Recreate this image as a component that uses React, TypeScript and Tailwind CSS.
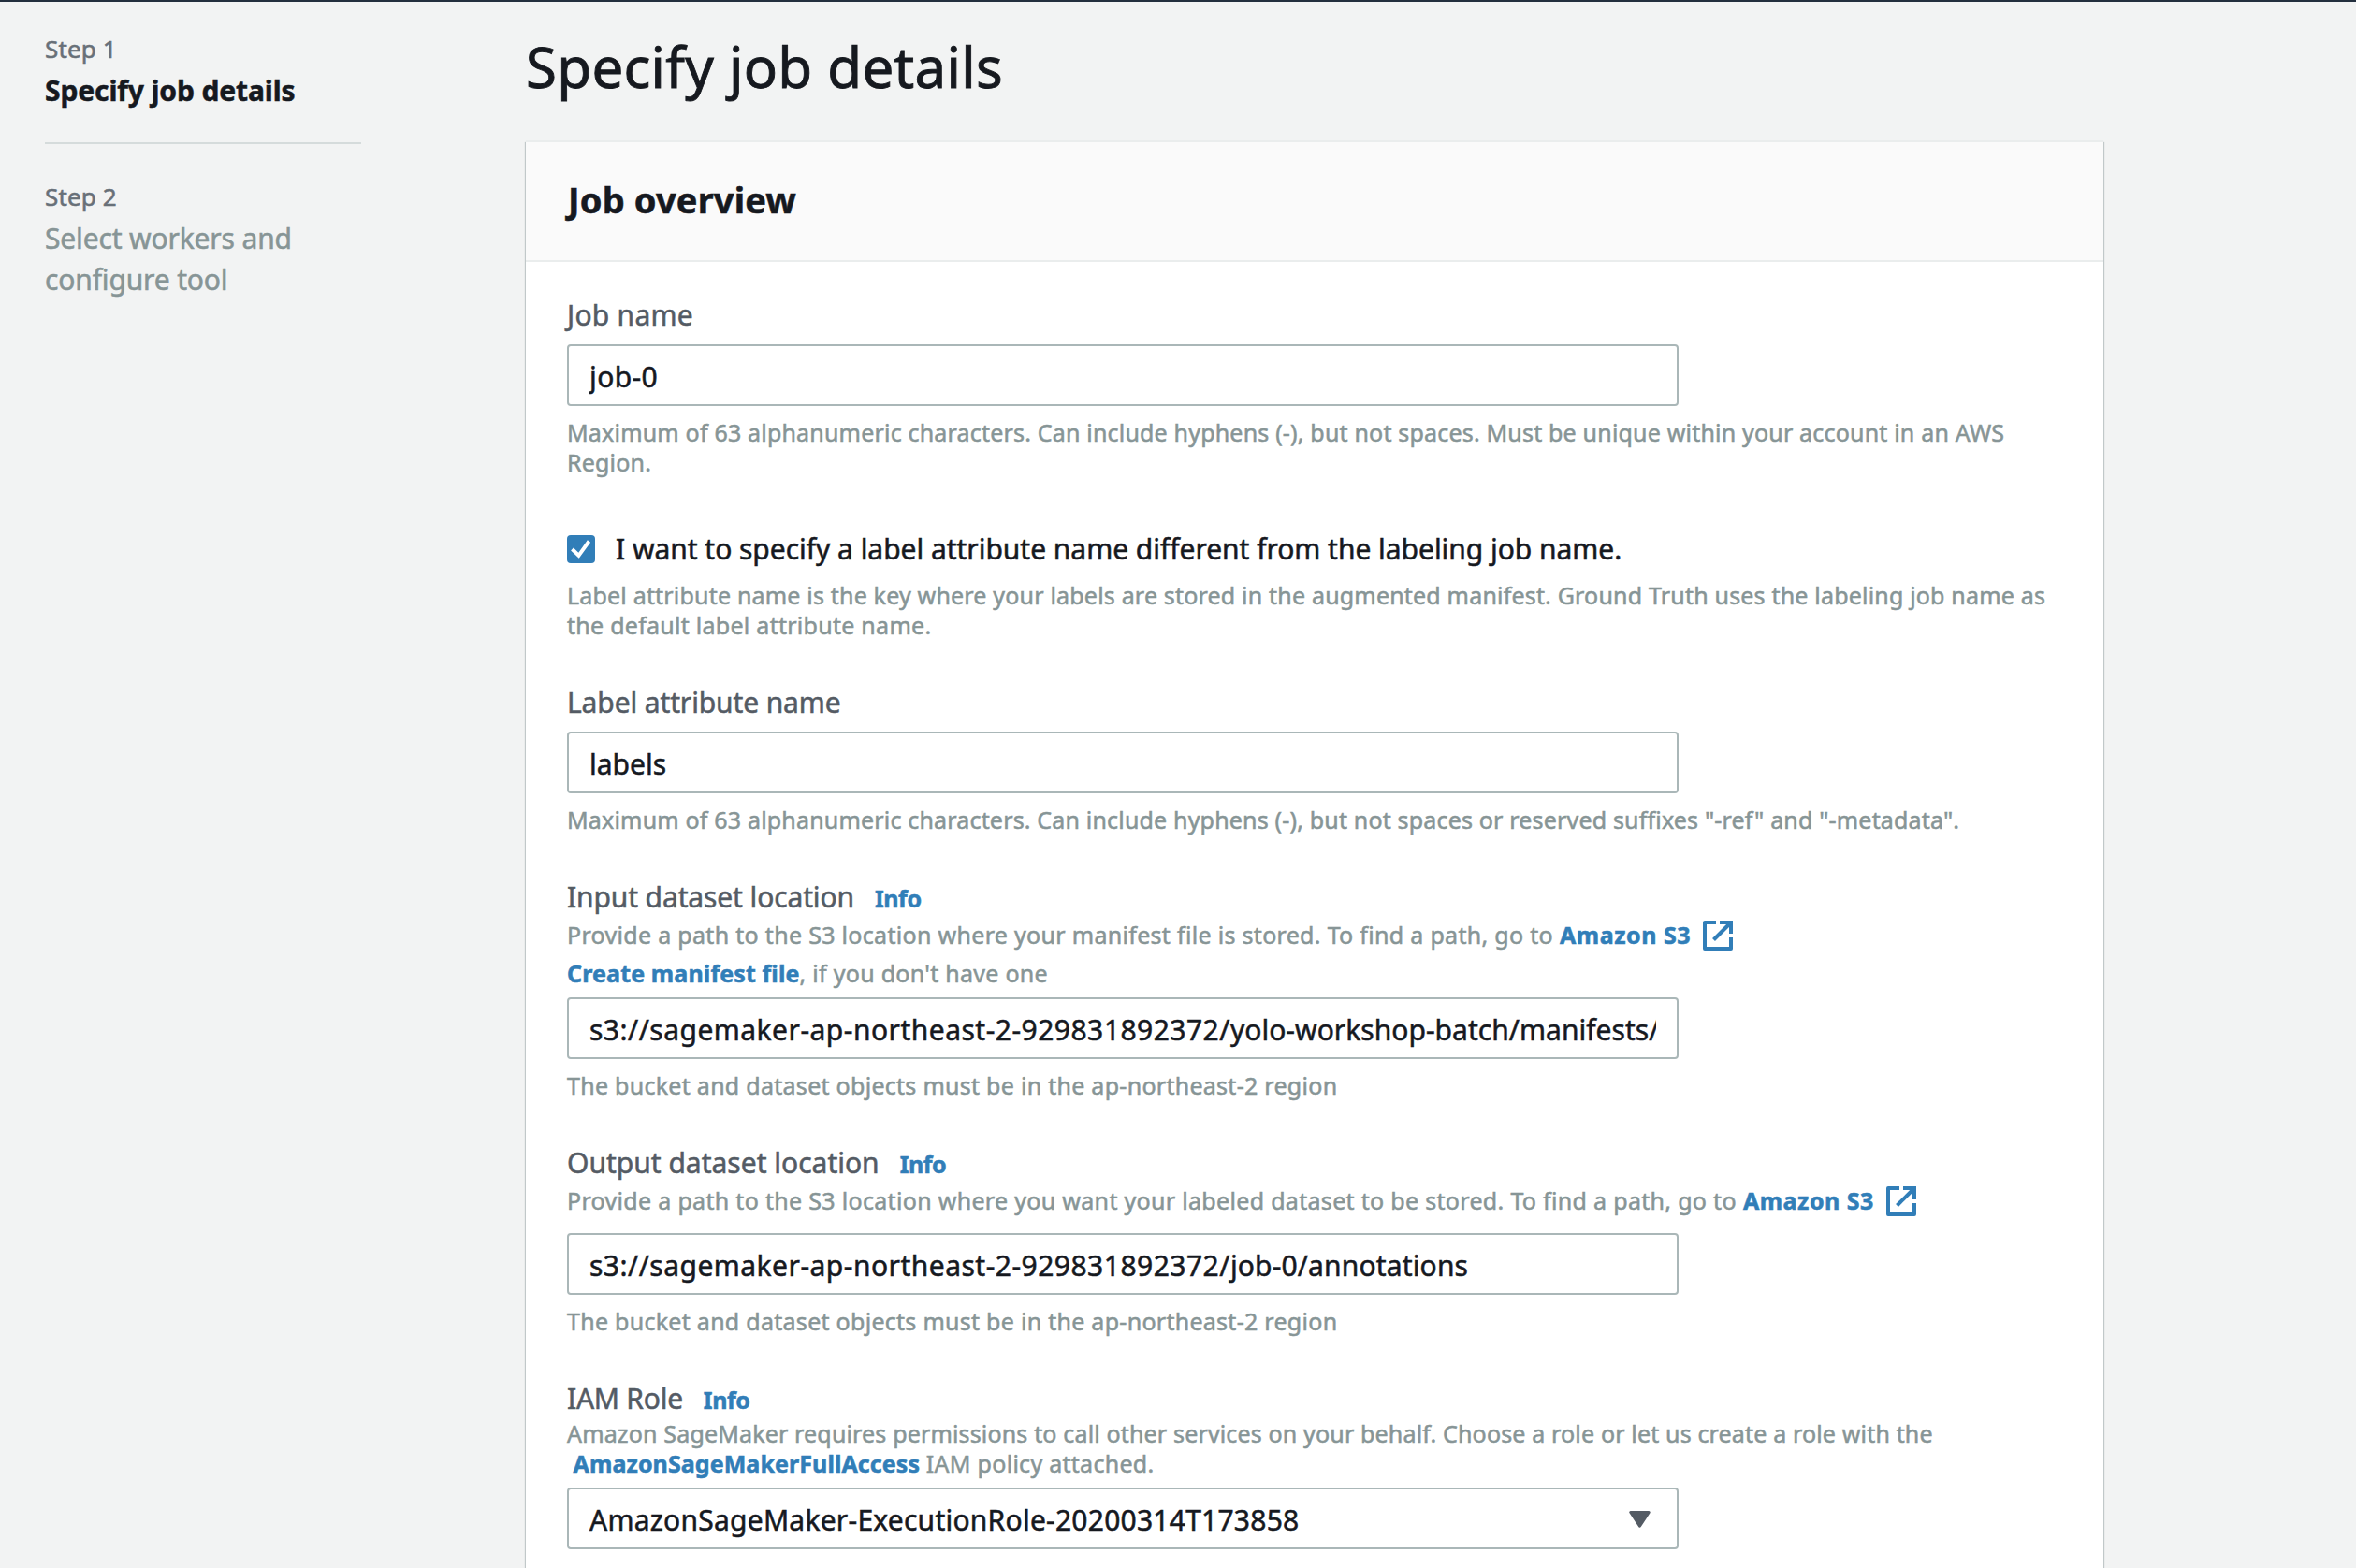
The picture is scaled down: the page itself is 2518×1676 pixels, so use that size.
import type { ReactNode } from "react";

function ExternalIcon() {
  return (
    <svg className="ml-[13px] size-8 shrink-0" viewBox="0 0 32 32" fill="none" stroke="currentColor" strokeWidth="4">
      <path d="M14 2H2V30H30V18" strokeLinejoin="round" />
      <path d="M18 2H30V14" />
      <path d="M29 3L11.5 20.5" />
    </svg>
  );
}

function Step({ number, children, divider }: { number: number; children: ReactNode; divider?: boolean }) {
  return (
    <li className={divider ? "mb-9 border-b-2 border-[#d5dbdb] pb-[33px]" : ""}>
      <p className="text-[26px] leading-10 tracking-[0.15px] text-[#687078]">Step {number}</p>
      {children}
    </li>
  );
}

function Label({ children, info, className = "tracking-[-0.12px]" }: { children: ReactNode; info?: boolean; className?: string }) {
  return (
    <div className={`flex h-10 items-baseline text-[30px] leading-[42px] text-[#545b64] ${className}`}>
      <span>{children}</span>
      {info && <a className="ml-[22px] text-[25px] leading-none font-bold tracking-[-0.4px] text-[#317eb8]">Info</a>}
    </div>
  );
}

function Hint({ children, className = "tracking-[0.19px]" }: { children: ReactNode; className?: string }) {
  return <p className={`mt-3 text-[25px] leading-8 text-[#879596] ${className}`}>{children}</p>;
}

function TextField({ children, className }: { children: ReactNode; className: string }) {
  return (
    <div className={`h-[66px] w-[1188px] rounded-[4px] border-2 border-[#aab7b8] bg-white px-[22px] pt-[12px] ${className}`}>
      <div className="overflow-hidden text-[30px] leading-[42px] whitespace-nowrap text-[#16191f]">{children}</div>
    </div>
  );
}

function S3Link() {
  return (
    <a className="ml-[7px] flex items-center font-bold text-[#317eb8]">
      <span className="tracking-[0.5px]">Amazon S3</span>
      <ExternalIcon />
    </a>
  );
}

export default function App() {
  return (
    <div className="h-[1676px] overflow-hidden border-t-2 border-[#232f3e] bg-[#f2f3f3] font-['Noto_Sans',sans-serif] text-[#16191f] [-webkit-text-stroke:0.55px]">
      <div className="flex">
        <nav className="ml-12 w-[338px] shrink-0 pt-[30px]">
          <ol>
            <Step number={1} divider>
              <p className="mt-[3px] text-[30px] leading-[44px] font-bold tracking-[-0.12px]">Specify job details</p>
            </Step>
            <Step number={2}>
              <p className="mt-[3px] text-[30px] leading-[44px] tracking-[-0.15px] text-[#879596]">
                Select workers and
                <br />
                configure tool
              </p>
            </Step>
          </ol>
        </nav>

        <main className="ml-[176px] w-[1686px] shrink-0 pt-[33px]">
          <h1 className="text-[60px] leading-[72px] tracking-[0.27px] [-webkit-text-stroke:0.9px]">Specify job details</h1>

          <section className="mt-[43px] h-[1600px] border-t-2 border-[#eaeded] bg-white shadow-[1px_2px_1px_rgba(0,28,36,0.2),-1px_2px_1px_rgba(0,28,36,0.2)]">
            <header className="h-32 border-b-2 border-[#eaeded] bg-[#fafafa] px-[45px] pt-9">
              <h2 className="text-[38px] leading-[50px] font-bold tracking-[0.16px]">Job overview</h2>
            </header>

            <div className="px-11 pt-9">
              <Label className="tracking-[0.25px]">Job name</Label>
              <TextField className="mt-3 tracking-[0.4px]">job-0</TextField>
              <Hint>
                Maximum of 63 alphanumeric characters. Can include hyphens (-), but not spaces. Must be unique within
                your account in an AWS Region.
              </Hint>

              <div className="mt-[54px] flex items-center">
                <span className="mt-[2px] flex size-[30px] items-center justify-center rounded-[4px] bg-[#317eb8] text-white">
                  <svg className="size-[30px]" viewBox="0 0 30 30" fill="none" stroke="currentColor" strokeWidth="4">
                    <path d="M5.5 15L12.5 21.8L23.5 6.5" />
                  </svg>
                </span>
                <span className="mt-px -mb-px ml-[22px] text-[30px] leading-[44px] tracking-[-0.03px]">
                  I want to specify a label attribute name different from the labeling job name.
                </span>
              </div>
              <Hint>
                Label attribute name is the key where your labels are stored in the augmented manifest. Ground Truth
                uses the labeling job name as{" "}
                <span className="tracking-[0.27px]">the default label attribute name.</span>
              </Hint>

              <div className="mt-[46px]">
                <Label>Label attribute name</Label>
                <TextField className="mt-3">labels</TextField>
                <Hint className="tracking-[0.18px]">
                  Maximum of 63 alphanumeric characters. Can include hyphens (-), but not spaces or reserved suffixes
                  "-ref" and "-metadata".
                </Hint>
              </div>

              <div className="mt-[46px]">
                <Label info>Input dataset location</Label>
                <div className="mt-px text-[25px] leading-[41px] text-[#879596]">
                  <div className="flex items-center">
                    <span className="tracking-[0.31px]">
                      Provide a path to the S3 location where your manifest file is stored. To find a path, go to
                    </span>
                    <S3Link />
                  </div>
                  <p className="tracking-[0.28px]">
                    <a className="font-bold tracking-[0.13px] text-[#317eb8]">Create manifest file</a>, if you don't
                    have one
                  </p>
                </div>
                <TextField className="mt-[5px]">
                  <span className="tracking-[0.48px]">s3://sagemaker-ap-northeast-2-929831892372/</span>
                  <span className="tracking-[0.03px]">yolo-workshop-batch/manifests/</span>
                </TextField>
                <Hint className="tracking-[0.28px]">The bucket and dataset objects must be in the ap-northeast-2 region</Hint>
              </div>

              <div className="mt-[46px]">
                <Label info className="tracking-normal">Output dataset location</Label>
                <div className="mt-px flex items-center text-[25px] leading-[41px] text-[#879596]">
                  <span className="tracking-[0.315px]">
                    Provide a path to the S3 location where you want your labeled dataset to be stored. To find a path,
                    go to
                  </span>
                  <S3Link />
                </div>
                <TextField className="mt-[14px]">
                  <span className="tracking-[0.48px]">s3://sagemaker-ap-northeast-2-929831892372/</span>
                  <span className="tracking-[0.15px]">job-0/annotations</span>
                </TextField>
                <Hint className="tracking-[0.28px]">The bucket and dataset objects must be in the ap-northeast-2 region</Hint>
              </div>

              <div className="mt-[46px]">
                <Label info className="tracking-[-0.25px]">IAM Role</Label>
                <p className="mt-0.5 text-[25px] leading-8 tracking-[0.16px] text-[#879596]">
                  Amazon SageMaker requires permissions to call other services on your behalf. Choose a role or let us
                  create a role with the{" "}
                  <a className="font-bold tracking-[0.08px] text-[#317eb8]">&nbsp;AmazonSageMakerFullAccess</a>
                  <span className="tracking-[0.28px]"> IAM policy attached.</span>
                </p>
                <div className="mt-2.5 flex h-[66px] w-[1188px] items-center justify-between rounded-[4px] border-2 border-[#aab7b8] bg-white pr-7 pl-[22px]">
                  <span className="pt-[3px] text-[30px] leading-10 tracking-[0.24px]">
                    AmazonSageMaker-ExecutionRole-20200314T173858
                  </span>
                  <svg className="mt-0.5 h-[18px] w-[23px] text-[#545b64]" viewBox="0 0 23 18" fill="currentColor" stroke="currentColor" strokeWidth="3" strokeLinejoin="round">
                    <path d="M1.8 1.5H21.2L11.5 16.2Z" />
                  </svg>
                </div>
              </div>
            </div>
          </section>
        </main>
      </div>
    </div>
  );
}
